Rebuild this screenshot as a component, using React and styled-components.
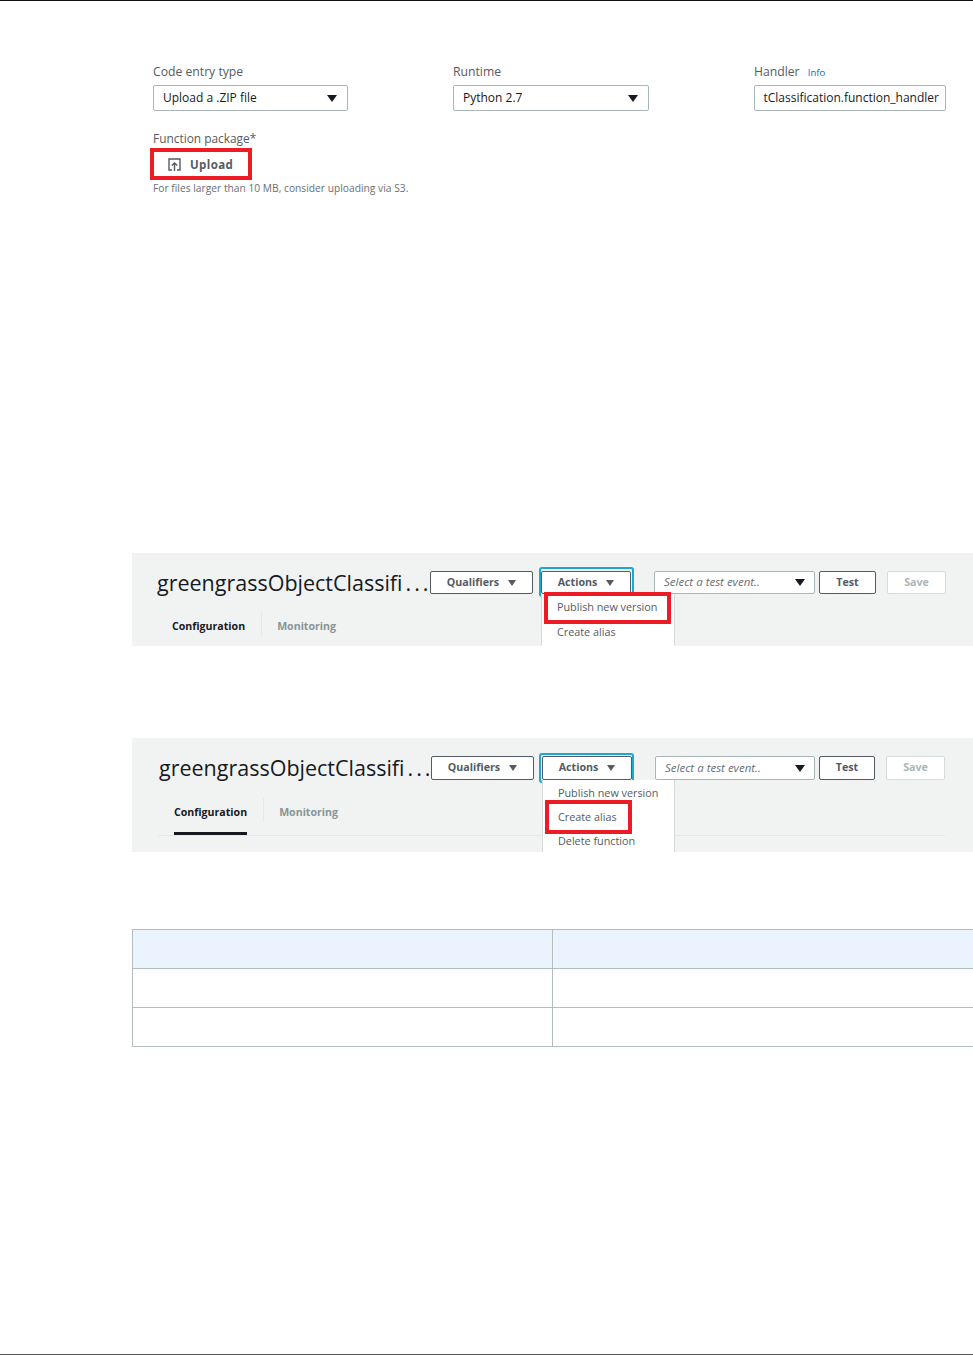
import React from "react";
import styled, { createGlobalStyle } from "styled-components";

const panels = [
  {
    height: 93,
    titleLeft: 25,
    titleWidth: 273,
    buttonHeight: 23,
    widths: { select: 161, test: 57, save: 59 },
    menuWidth: 134,
    itemHeight: 25,
    ring: { top: 4, left: 2, right: 3 },
    tabsLeft: 40,
    tabsTop: 18,
    selected: false,
    menuItems: [
      { label: "Publish new version", mark: { left: 2, top: -3, width: 127, height: 32 } },
      { label: "Create alias" },
    ],
  },
  {
    height: 114,
    titleLeft: 27,
    titleWidth: 272,
    buttonHeight: 24,
    widths: { select: 160, test: 56, save: 59 },
    menuWidth: 133,
    itemHeight: 24,
    ring: { top: 3, left: 3, right: 2 },
    tabsLeft: 42,
    tabsTop: 18,
    selected: true,
    menuItems: [
      { label: "Publish new version" },
      { label: "Create alias", mark: { left: 2, top: -5, width: 87, height: 34 } },
      { label: "Delete function" },
    ],
  },
];

const App = () => {
  return (
    <Page>
      <GlobalStyle />
      <Form>
        <FormRow>
          <Field $width={300}>
            <Label>Code entry type</Label>
            <Select $width={195}>
              Upload a .ZIP file
              <Caret />
            </Select>
          </Field>
          <Field $width={301}>
            <Label>Runtime</Label>
            <Select $width={196}>
              Python 2.7
              <Caret />
            </Select>
          </Field>
          <Field $width={192}>
            <Label>
              Handler <InfoLink>Info</InfoLink>
            </Label>
            <HandlerInput>tClassification.function_handler</HandlerInput>
          </Field>
        </FormRow>
        <PackageLabel>Function package*</PackageLabel>
        <UploadBox>
          <UploadIcon width="13" height="13" viewBox="0 0 13 13">
            <path d="M4 12H1V1h11v11H9" fill="none" stroke="#545b64" strokeWidth="1.4" />
            <path d="M6.5 13V5M3.8 7.6l2.7-2.7 2.7 2.7" fill="none" stroke="#545b64" strokeWidth="1.4" />
          </UploadIcon>
          Upload
        </UploadBox>
        <Hint>For files larger than 10 MB, consider uploading via S3.</Hint>
      </Form>

      {panels.map((panel, i) => (
        <Panel key={i} $height={panel.height} $first={i === 0}>
          <HeaderRow $left={panel.titleLeft}>
            <Title $width={panel.titleWidth}>
              greengrassObjectClassifi<Dots>...</Dots>
            </Title>
            <ActionButton $width={103} $height={panel.buttonHeight}>
              Qualifiers
              <SmallCaret />
            </ActionButton>
            <ActionsWrap $ring={panel.ring}>
              <ActionButton $width={90} $height={panel.buttonHeight}>
                Actions
                <SmallCaret />
              </ActionButton>
              <Menu $width={panel.menuWidth}>
                {panel.menuItems.map((item) => (
                  <MenuItem key={item.label} $height={panel.itemHeight}>
                    {item.label}
                    {item.mark && (
                      <Mark
                        $left={item.mark.left}
                        $top={item.mark.top}
                        $width={item.mark.width}
                        $height={item.mark.height}
                      />
                    )}
                  </MenuItem>
                ))}
              </Menu>
            </ActionsWrap>
            <EventSelect $width={panel.widths.select} $height={panel.buttonHeight}>
              Select a test event..
              <Caret />
            </EventSelect>
            <TestButton $width={panel.widths.test} $height={panel.buttonHeight}>
              Test
            </TestButton>
            <SaveButton $width={panel.widths.save} $height={panel.buttonHeight}>
              Save
            </SaveButton>
          </HeaderRow>
          <Tabs $left={panel.tabsLeft} $top={panel.tabsTop} $ruled={panel.selected}>
            <Tab $active $underlined={panel.selected}>Configuration</Tab>
            <TabDivider />
            <Tab>Monitoring</Tab>
          </Tabs>
        </Panel>
      ))}

      <Table>
        <colgroup>
          <col width="420" />
          <col />
        </colgroup>
        <thead>
          <tr>
            <HeadCell />
            <HeadCell />
          </tr>
        </thead>
        <tbody>
          <tr>
            <Cell />
            <Cell />
          </tr>
          <tr>
            <Cell />
            <Cell />
          </tr>
        </tbody>
      </Table>
    </Page>
  );
};

// Styled Components
const GlobalStyle = createGlobalStyle`
  html, body {
    margin: 0;
    padding: 0;
    background: #fff;
    font-family: "Open Sans", "Noto Sans", sans-serif;
  }
`;

const Page = styled.div`
  box-sizing: border-box;
  height: 1355px;
  overflow: hidden;
  border-top: 1px solid #111;
  border-bottom: 1px solid #555;
`;

const Form = styled.div`
  padding: 63px 0 0 153px;
`;

const FormRow = styled.div`
  display: flex;
`;

const Field = styled.div`
  width: ${(p) => p.$width}px;
`;

const Label = styled.div`
  height: 21px;
  font-size: 12.2px;
  line-height: 16px;
  color: #545b64;
`;

const InfoLink = styled.span`
  margin-left: 5px;
  font-size: 9.5px;
  color: #0073bb;
`;

const Select = styled.div`
  box-sizing: border-box;
  width: ${(p) => p.$width}px;
  height: ${(p) => p.$height || 26}px;
  padding: 0 10px 2px 9px;
  display: flex;
  align-items: center;
  justify-content: space-between;
  background: #fff;
  border: 1px solid #aab7b8;
  border-radius: 2px;
  font-size: 12px;
  color: #16191f;
`;

const Caret = styled.span`
  width: 0;
  height: 0;
  margin-top: 2px;
  border-left: 5px solid transparent;
  border-right: 5px solid transparent;
  border-top: 7px solid #16191f;
`;

const HandlerInput = styled.div`
  box-sizing: border-box;
  width: 192px;
  height: 26px;
  padding: 0 6px 2px 8px;
  display: flex;
  align-items: center;
  justify-content: flex-end;
  white-space: nowrap;
  overflow: hidden;
  border: 1px solid #aab7b8;
  border-radius: 2px;
  font-size: 12px;
  color: #16191f;
`;

const PackageLabel = styled(Label)`
  margin-top: 19px;
  height: 18px;
  font-size: 11.9px;
`;

const UploadBox = styled.div`
  box-sizing: border-box;
  width: 102px;
  height: 32px;
  margin-left: -3px;
  padding-left: 14px;
  display: flex;
  align-items: center;
  gap: 9px;
  border: 4px solid #ed1c24;
  font-size: 11.5px;
  font-weight: 700;
  letter-spacing: 0.4px;
  color: #545b64;
`;

const UploadIcon = styled.svg`
  flex: none;
`;

const Hint = styled.div`
  margin-top: 2px;
  font-size: 10.25px;
  line-height: 13px;
  color: #687078;
`;

const Panel = styled.section`
  margin: ${(p) => (p.$first ? "358px" : "92px")} 0 0 132px;
  height: ${(p) => p.$height}px;
  overflow: hidden;
  background: #f1f3f3;
`;

const HeaderRow = styled.div`
  display: flex;
  align-items: flex-start;
  padding: 18px 0 0 ${(p) => p.$left}px;
`;

const Title = styled.h1`
  width: ${(p) => p.$width}px;
  margin: 0;
  flex: none;
  font-size: 21.5px;
  font-weight: 400;
  line-height: 23px;
  white-space: nowrap;
  color: #16191f;
`;

const Dots = styled.span`
  margin-left: 3px;
  letter-spacing: 3px;
`;

const ActionButton = styled.button`
  box-sizing: border-box;
  width: ${(p) => p.$width}px;
  height: ${(p) => p.$height}px;
  padding: 0 0 2px;
  display: flex;
  align-items: center;
  justify-content: center;
  gap: 9px;
  background: #fff;
  border: 1px solid #545b64;
  border-radius: 2px;
  font-family: inherit;
  font-size: 10.7px;
  font-weight: 700;
  color: #545b64;
`;

const SmallCaret = styled.span`
  width: 0;
  height: 0;
  margin-top: 2px;
  border-left: 4.5px solid transparent;
  border-right: 4.5px solid transparent;
  border-top: 6px solid #545b64;
`;

const ActionsWrap = styled.div`
  position: relative;
  margin-left: 8px;

  &::before {
    content: "";
    position: absolute;
    top: -${(p) => p.$ring.top}px;
    left: -${(p) => p.$ring.left}px;
    right: -${(p) => p.$ring.right}px;
    height: 30px;
    border: 2px solid #1ea7cf;
    border-radius: 3px;
    box-sizing: border-box;
  }

  ${ActionButton} {
    position: relative;
  }
`;

const Menu = styled.ul`
  position: absolute;
  top: 100%;
  left: 0;
  width: ${(p) => p.$width}px;
  height: 120px;
  margin: 0;
  padding: 1px 0 0;
  list-style: none;
  background: #fff;
  border-left: 1px solid #d5dbdb;
  border-right: 1px solid #d5dbdb;
  box-sizing: border-box;
`;

const MenuItem = styled.li`
  position: relative;
  height: ${(p) => p.$height}px;
  padding-left: 15px;
  font-size: 10.8px;
  line-height: 24px;
  white-space: nowrap;
  color: #545b64;
`;

const Mark = styled.span`
  position: absolute;
  left: ${(p) => p.$left}px;
  top: ${(p) => p.$top}px;
  width: ${(p) => p.$width}px;
  height: ${(p) => p.$height}px;
  box-sizing: border-box;
  border: 4px solid #ed1c24;
`;

const EventSelect = styled(Select)`
  margin-left: 23px;
  padding: 0 9px 2px;
  font-size: 11.5px;
  font-style: italic;
  color: #687078;
`;

const TestButton = styled(ActionButton)`
  margin-left: 4px;
`;

const SaveButton = styled(ActionButton)`
  margin-left: 11px;
  border-color: #d5dbdb;
  color: #aab7b8;
`;

const Tabs = styled.div`
  display: flex;
  align-items: stretch;
  gap: 15.5px;
  width: ${(p) => (p.$ruled ? "787px" : "auto")};
  margin: ${(p) => p.$top}px 0 0 ${(p) => (p.$ruled ? 26 : p.$left)}px;
  padding-left: ${(p) => (p.$ruled ? p.$left - 26 : 0)}px;
  box-sizing: border-box;
  border-bottom: ${(p) => (p.$ruled ? "1px solid #e5e8e8" : "none")};
`;

const Tab = styled.div`
  height: 37px;
  line-height: 28px;
  box-sizing: border-box;
  font-size: 10.6px;
  font-weight: 700;
  white-space: nowrap;
  color: ${(p) => (p.$active ? "#16191f" : "#879596")};
  border-bottom: ${(p) => (p.$underlined ? "3px solid #16191f" : "none")};
`;

const TabDivider = styled.span`
  width: 1px;
  height: 24px;
  background: #e5e8e8;
`;

const Table = styled.table`
  width: 841px;
  margin: 77px 0 0 132px;
  border-collapse: collapse;
  table-layout: fixed;
  border-top: 1px solid #b2bfbd;
  border-left: 1px solid #b2bfbd;
`;

const HeadCell = styled.th`
  height: 38px;
  padding: 0;
  background: #eaf3fe;
  border-bottom: 1px solid #b2bfbd;
  border-right: 1px solid #b2bfbd;

  &:last-child {
    border-right: none;
  }
`;

const Cell = styled.td`
  height: 38px;
  padding: 0;
  border-bottom: 1px solid #b2bfbd;
  border-right: 1px solid #b2bfbd;

  &:last-child {
    border-right: none;
  }
`;

export default App;
